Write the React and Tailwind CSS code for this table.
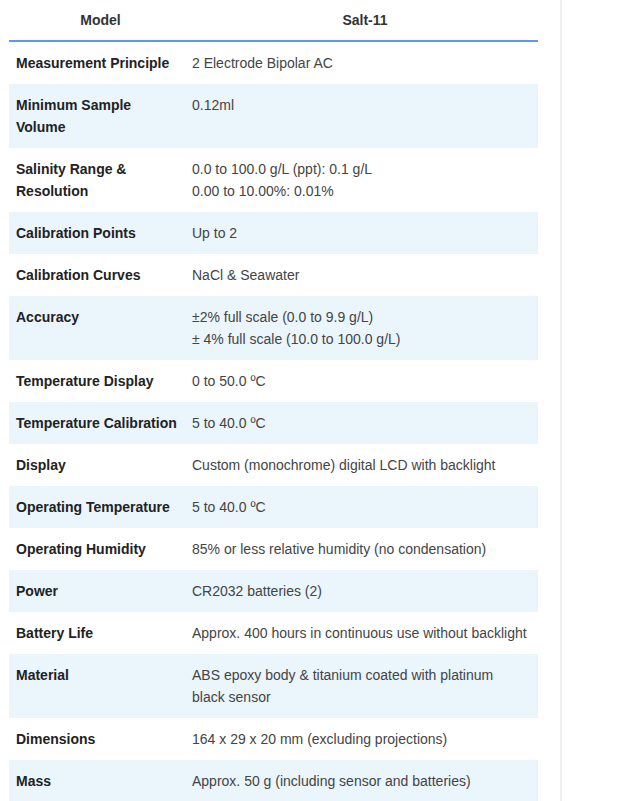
import React from 'react';

const specs = [
  ['Measurement Principle', ['2 Electrode Bipolar AC']],
  ['Minimum Sample Volume', ['0.12ml']],
  ['Salinity Range & Resolution', ['0.0 to 100.0 g/L (ppt): 0.1 g/L', '0.00 to 10.00%: 0.01%']],
  ['Calibration Points', ['Up to 2']],
  ['Calibration Curves', ['NaCl & Seawater']],
  ['Accuracy', ['±2% full scale (0.0 to 9.9 g/L)', '± 4% full scale (10.0 to 100.0 g/L)']],
  ['Temperature Display', ['0 to 50.0 ºC']],
  ['Temperature Calibration', ['5 to 40.0 ºC']],
  ['Display', ['Custom (monochrome) digital LCD with backlight']],
  ['Operating Temperature', ['5 to 40.0 ºC']],
  ['Operating Humidity', ['85% or less relative humidity (no condensation)']],
  ['Power', ['CR2032 batteries (2)']],
  ['Battery Life', ['Approx. 400 hours in continuous use without backlight']],
  ['Material', ['ABS epoxy body & titanium coated with platinum black sensor']],
  ['Dimensions', ['164 x 29 x 20 mm (excluding projections)']],
  ['Mass', ['Approx. 50 g (including sensor and batteries)']],
];

function App() {
  return (
    <div className="flex min-h-screen bg-white font-['Liberation_Sans',Arial,sans-serif] text-[#333]">
      <div className="w-[562px] shrink-0 border-r-2 border-[#efefef] pl-[9px] pr-[22px]">
        <table className="w-full border-collapse text-[14px] leading-[22px]">
          <thead>
            <tr className="border-b-2 border-[#5b9be6]">
              <th className="h-[41px] w-[183px] text-center text-[14px] font-bold text-[#333]">Model</th>
              <th className="h-[41px] text-center text-[14px] font-bold text-[#333]">Salt-11</th>
            </tr>
          </thead>
          <tbody>
            {specs.map(([label, values], i) => (
              <tr key={label} className={i % 2 === 1 ? 'bg-[#eaf5fc]' : 'bg-white'}>
                <td className="py-[10px] pl-[7px] pr-2 align-top font-bold text-[#222]">{label}</td>
                <td className="py-[10px] pl-0 pr-[10px] align-top text-[#444]">
                  {values.map((v) => (
                    <div key={v}>{v}</div>
                  ))}
                </td>
              </tr>
            ))}
          </tbody>
        </table>
      </div>
    </div>
  );
}

export default App;
